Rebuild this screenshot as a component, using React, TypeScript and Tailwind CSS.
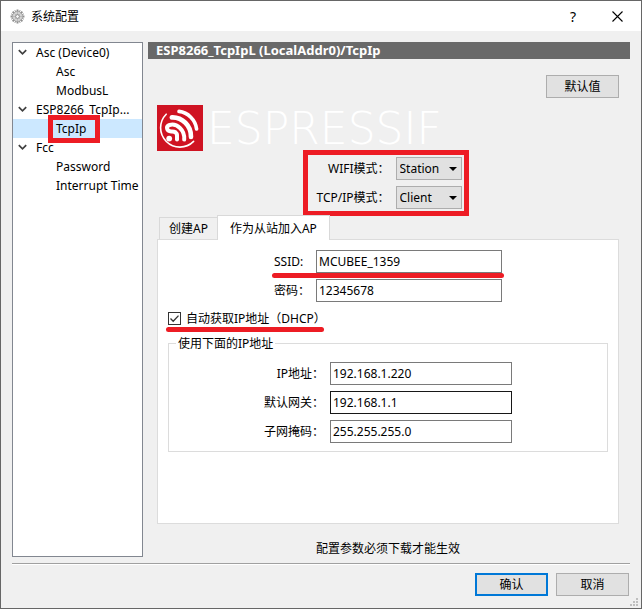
import { useState } from "react";
import type { ReactNode } from "react";
import clsx from "clsx";

type TreeGroup = {
  name: string;
  items: string[];
};

const tree: TreeGroup[] = [
  { name: "Asc (Device0)", items: ["Asc", "ModbusL"] },
  { name: "ESP8266_TcpIp...", items: ["TcpIp"] },
  { name: "Fcc", items: ["Password", "Interrupt Time"] },
];

const tabs = ["创建AP", "作为从站加入AP"];

const ipFields = [
  { id: "ip", label: "IP地址：", value: "192.168.1.220" },
  { id: "gateway", label: "默认网关：", value: "192.168.1.1" },
  { id: "mask", label: "子网掩码：", value: "255.255.255.0" },
];

function GearIcon() {
  return (
    <svg width="15" height="15" viewBox="0 0 16 16" aria-hidden="true">
      <g stroke="#8f8f8f" strokeWidth="2">
        <path d="M8 0.6v14.8M0.6 8h14.8M2.8 2.8l10.4 10.4M13.2 2.8L2.8 13.2" />
        <path d="M5.2 1.2l5.6 13.6M10.8 1.2L5.2 14.8M1.2 5.2l13.6 5.6M1.2 10.8l13.6-5.6" strokeWidth="1" />
      </g>
      <circle cx="8" cy="8" r="5.4" fill="#d4d4d4" stroke="#a0a0a0" strokeWidth="0.8" />
      <path d="M8 3v10M3 8h10M4.5 4.5l7 7M11.5 4.5l-7 7" stroke="#b2b2b2" strokeWidth="0.8" />
      <circle cx="8" cy="8" r="2" fill="#fafafa" stroke="#858585" />
    </svg>
  );
}

function EspressifMark() {
  return (
    <svg width="46" height="46" viewBox="0 0 46 46" aria-hidden="true">
      <rect width="46" height="46" fill="#cf1322" />
      <g fill="none" stroke="#fff" strokeLinecap="round">
        <path d="M9.2 9.2A19.2 19.2 0 0 0 36.6 36.4" strokeWidth="1.6" />
        <path d="M14.8 12.4C25 12 34.4 20.5 34 32" strokeWidth="4.6" />
        <path d="M22 6.4C31 7.4 38.6 15 39.6 24" strokeWidth="3.6" />
        <path
          d="M20 30.8C20 27.4 17.6 26.2 14.4 26.4C9.6 26.6 8.4 21.4 12.6 20C20 18 28 25 27.2 34.6"
          strokeWidth="4"
        />
        <path d="M20 30.8v3.8" strokeWidth="4" />
      </g>
      <circle cx="12.2" cy="33.6" r="2.9" fill="#fff" />
    </svg>
  );
}

function Chevron() {
  return (
    <svg width="9" height="7" viewBox="0 0 9 7" className="shrink-0" aria-hidden="true">
      <path d="M0.8 1.2L4.5 4.9L8.2 1.2" fill="none" stroke="#404040" strokeWidth="1.7" />
    </svg>
  );
}

function PushButton({ children, primary }: { children: ReactNode; primary?: boolean }) {
  return (
    <button
      type="button"
      className={clsx(
        "flex h-[23px] w-[73px] items-center justify-center bg-[#e1e1e1]",
        primary ? "border-2 border-[#0078d7]" : "border border-[#adadad]",
      )}
    >
      {children}
    </button>
  );
}

function ModeSelect({ id, label, options }: { id: string; label: string; options: string[] }) {
  return (
    <>
      <label htmlFor={id} className="pl-[2px] text-right">
        {label}
      </label>
      <div className="relative">
        <select
          id={id}
          className="block h-[23px] w-[66px] appearance-none border border-[#adadad] bg-[#e1e1e1] pl-[3px]"
        >
          {options.map((option) => (
            <option key={option}>{option}</option>
          ))}
        </select>
        <svg
          width="8"
          height="4"
          viewBox="0 0 8 4"
          className="pointer-events-none absolute top-[10px] right-[5px]"
          aria-hidden="true"
        >
          <path d="M0 0h8L4 4z" fill="#000" />
        </svg>
      </div>
    </>
  );
}

export default function App() {
  const [selected, setSelected] = useState("TcpIp");
  const [activeTab, setActiveTab] = useState(tabs[1]);

  return (
    <div
      lang="zh-CN"
      className="flex min-h-screen flex-col border border-[#666] bg-[#f0f0f0] font-['Noto_Sans','Noto_Sans_CJK_SC',sans-serif] text-[12px] leading-[17px] text-black"
    >
      {/* Title bar */}
      <header className="flex h-[30px] items-center bg-white pr-[18px] pl-[9px]">
        <GearIcon />
        <h1 className="ml-[6px] flex-1">系统配置</h1>
        <button type="button" aria-label="帮助" className="text-[14px]">
          ?
        </button>
        <button type="button" aria-label="关闭" className="ml-[36px]">
          <svg width="11" height="11" viewBox="0 0 11 11" aria-hidden="true">
            <path d="M0.5 0.5l10 10M10.5 0.5l-10 10" stroke="#000" strokeWidth="1.1" />
          </svg>
        </button>
      </header>

      <div className="flex flex-1 gap-[5px] px-[11px] pt-[11px]">
        {/* Device tree */}
        <nav className="w-[131px] shrink-0 border border-[#828790] bg-white leading-[19px]">
          {tree.map((group) => (
            <div key={group.name}>
              <div className="flex items-center gap-[9px] pl-[5px]">
                <Chevron />
                <span className="whitespace-nowrap">{group.name}</span>
              </div>
              {group.items.map((item) => (
                <button
                  key={item}
                  type="button"
                  onClick={() => setSelected(item)}
                  className={clsx(
                    "relative block h-[19px] w-full pl-[43px] text-left whitespace-nowrap",
                    selected === item && "bg-[#cce8ff]",
                  )}
                >
                  {item}
                  {item === "TcpIp" && (
                    <span className="absolute -top-[4px] left-[35px] h-[28px] w-[52px] border-5 border-[#ed1c24]" />
                  )}
                </button>
              ))}
            </div>
          ))}
        </nav>

        <main className="flex min-w-0 flex-1 flex-col">
          <h2 className="h-[17px] bg-[#696969] pl-2 text-[13px] font-bold text-white">
            ESP8266_TcpIpL (LocalAddr0)/TcpIp
          </h2>

          <div className="flex flex-1 flex-col pr-[11px] pl-[9px]">
            <div className="mt-4 flex justify-end">
              <PushButton>默认值</PushButton>
            </div>

            <div className="mt-[7px] flex h-[46px] items-center gap-[4px]">
              <EspressifMark />
              <span className="font-['DejaVu_Sans','Lato',sans-serif] text-[44px] font-extralight text-white">
                ESPRESSIF
              </span>
            </div>

            <div className="relative mt-[6px] grid grid-cols-[auto_auto] items-center gap-[6px] self-center">
              <ModeSelect id="wifi" label="WIFI模式：" options={["Station", "AP"]} />
              <ModeSelect id="tcp" label="TCP/IP模式：" options={["Client", "Server"]} />
              <div className="pointer-events-none absolute -inset-y-[7px] -right-[7px] -left-[11px] border-5 border-[#ed1c24]" />
            </div>

            {/* Tabs overlap the panel border by one pixel */}
            <div role="tablist" className="mt-[6px] flex items-end pl-[2px]">
              {tabs.map((tab) => (
                <button
                  key={tab}
                  type="button"
                  role="tab"
                  aria-selected={activeTab === tab}
                  onClick={() => setActiveTab(tab)}
                  className={clsx(
                    "border border-b-0 border-[#d9d9d9]",
                    activeTab === tab
                      ? "z-10 -mb-px h-[25px] bg-white px-[12px]"
                      : "h-[22px] border-r-0 bg-[#f0f0f0] px-[9px]",
                  )}
                >
                  {tab}
                </button>
              ))}
            </div>

            <form className="flex flex-1 flex-col border border-[#dcdcdc] bg-white px-[10px] pt-[10px]">
              <div className="grid grid-cols-[auto_186px] items-center gap-[6px] self-center">
                <label htmlFor="ssid">SSID:</label>
                <div className="relative">
                  <input
                    id="ssid"
                    defaultValue="MCUBEE_1359"
                    className="block h-[23px] w-full border border-[#7a7a7a] px-[2px]"
                  />
                  <div className="absolute top-[23px] -right-[2px] -left-[44px] h-[5px] rounded-full bg-[#ed1c24]" />
                </div>
                <label htmlFor="password">密码：</label>
                <input
                  id="password"
                  defaultValue="12345678"
                  className="block h-[23px] w-full border border-[#7a7a7a] px-[2px]"
                />
              </div>

              <label className="relative mt-[8px] flex items-center gap-[5px] self-start">
                <input type="checkbox" defaultChecked className="peer size-[13px] appearance-none border border-[#333] bg-white" />
                <svg
                  width="13"
                  height="13"
                  viewBox="0 0 13 13"
                  className="pointer-events-none invisible absolute left-0 peer-checked:visible"
                  aria-hidden="true"
                >
                  <path d="M2.5 6.5l2.7 2.8L10.5 3.6" fill="none" stroke="#333" strokeWidth="1.3" />
                </svg>
                自动获取IP地址（DHCP）
                <span className="absolute top-[17px] -left-[2px] h-[5px] w-[158px] rounded-full bg-[#ed1c24]" />
              </label>

              <fieldset className="mt-[8px] flex flex-col items-center border border-[#dcdcdc] pt-[10px] pb-[8px]">
                <legend className="ml-[7px] px-[2px]">使用下面的IP地址</legend>
                <div className="grid grid-cols-[auto_182px] items-center gap-[6px]">
                  {ipFields.map((field) => (
                    <div key={field.id} className="contents">
                      <label htmlFor={field.id} className="text-right">
                        {field.label}
                      </label>
                      <input
                        id={field.id}
                        defaultValue={field.value}
                        className={clsx(
                          "block h-[23px] w-full border px-[2px]",
                          field.id === "gateway" ? "border-[#171717]" : "border-[#7a7a7a]",
                        )}
                      />
                    </div>
                  ))}
                </div>
              </fieldset>
            </form>

            <p className="mt-4 text-center">配置参数必须下载才能生效</p>
          </div>
        </main>
      </div>

      <footer className="relative px-[11px] pt-[6px] pb-[12px]">
        <div className="h-[2px] border-t border-[#a0a0a0] bg-white" />
        <div className="mt-[8px] flex justify-end gap-[8px] pr-px">
          <PushButton primary>确认</PushButton>
          <PushButton>取消</PushButton>
        </div>
        {/* Size grip */}
        <svg width="8" height="8" viewBox="0 0 8 8" className="absolute right-[3px] bottom-[2px]" aria-hidden="true">
          <path d="M6 0h2v2h-2zM3 3h2v2h-2zM6 3h2v2h-2zM0 6h2v2h-2zM3 6h2v2h-2zM6 6h2v2h-2z" fill="#bfbfbf" />
        </svg>
      </footer>
    </div>
  );
}
